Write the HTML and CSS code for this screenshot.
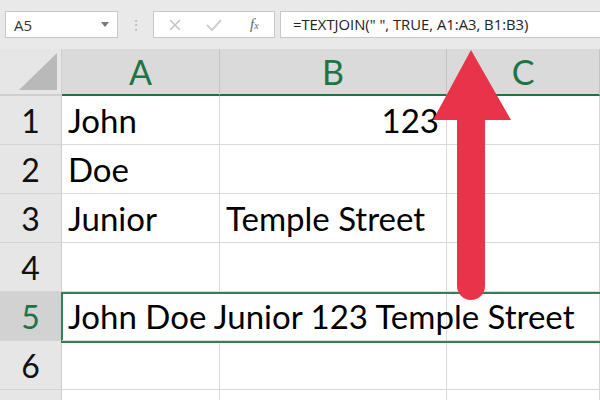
FILE: index.html
```html
<!DOCTYPE html>
<html lang="en">
<head>
    <meta charset="UTF-8">
    <meta name="viewport" content="width=device-width, initial-scale=1.0">
    <title>TEXTJOIN</title>
    <link rel="stylesheet" href="styles.css">
</head>
<body>
    <div class="formula-bar">
        <div class="name-box">
            <span>A5</span>
            <span class="caret"></span>
        </div>
        <div class="grip">⋮</div>
        <div class="fx-buttons">
            <svg class="btn-icon" width="14" height="14" viewBox="0 0 14 14">
                <path d="M2 2 L12 12 M12 2 L2 12" stroke="#c4c4c4" stroke-width="1.6" fill="none"/>
            </svg>
            <svg class="btn-icon" width="18" height="14" viewBox="0 0 18 14">
                <path d="M2 7 L7 12 L16 2" stroke="#cfcfcf" stroke-width="2" fill="none"/>
            </svg>
            <span class="fx">f<sub>x</sub></span>
        </div>
        <div class="formula-input">=TEXTJOIN(" ", TRUE, A1:A3, B1:B3)</div>
    </div>

    <div class="sheet">
        <div class="grid">
            <div class="corner"><span class="corner-tri"></span></div>
            <div class="col-head">A</div>
            <div class="col-head">B</div>
            <div class="col-head">C</div>

            <div class="row-head">1</div>
            <div class="cell">John</div>
            <div class="cell num">123</div>
            <div class="cell"></div>

            <div class="row-head">2</div>
            <div class="cell">Doe</div>
            <div class="cell"></div>
            <div class="cell"></div>

            <div class="row-head">3</div>
            <div class="cell">Junior</div>
            <div class="cell">Temple Street</div>
            <div class="cell"></div>

            <div class="row-head">4</div>
            <div class="cell"></div>
            <div class="cell"></div>
            <div class="cell"></div>

            <div class="row-head active">5</div>
            <div class="cell spill">John Doe Junior 123 Temple Street</div>
            <div class="cell"></div>
            <div class="cell"></div>

            <div class="row-head">6</div>
            <div class="cell"></div>
            <div class="cell"></div>
            <div class="cell"></div>

            <div class="row-head"></div>
            <div class="cell"></div>
            <div class="cell"></div>
            <div class="cell"></div>
        </div>

        <!-- selected range A5:C5 -->
        <div class="selection"></div>

        <!-- callout arrow pointing at the formula -->
        <svg class="arrow" width="80" height="252" viewBox="0 0 80 252">
            <path d="M35 0 L75 70 L49 70 L49 236 A14 14 0 0 1 21 236 L21 70 L-3 70 Z" fill="#e8334a"/>
        </svg>
    </div>
</body>
</html>
```

FILE: styles.css
```css
body {
    margin: 0;
    width: 600px;
    height: 400px;
    overflow: hidden;
    background: #ffffff;
    font-family: "Open Sans", "Noto Sans", sans-serif;
}

.formula-bar {
    display: flex;
    align-items: center;
    height: 49px;
    padding: 0 0 0 5px;
    background: #e9e9e9;
    box-sizing: border-box;
}
.name-box {
    display: flex;
    align-items: center;
    justify-content: space-between;
    width: 113px;
    height: 27px;
    padding: 0 8px 0 8px;
    box-sizing: border-box;
    background: #fff;
    border: 1px solid #c8c8c8;
    font-size: 15px;
    color: #333;
}
.caret {
    width: 0;
    height: 0;
    border-left: 4px solid transparent;
    border-right: 4px solid transparent;
    border-top: 5px solid #777;
}
.grip {
    width: 35px;
    text-align: center;
    color: #b5b5b5;
    font-size: 14px;
}
.fx-buttons {
    display: flex;
    align-items: center;
    width: 122px;
    height: 27px;
    box-sizing: border-box;
    background: #fff;
    border: 1px solid #c8c8c8;
    padding-left: 14px;
    gap: 23px;
}
.fx {
    font-family: "Liberation Serif", serif;
    font-style: italic;
    font-size: 15px;
    color: #666;
    margin-left: 4px;
}
.fx sub {
    font-size: 10px;
    vertical-align: 0;
}
.formula-input {
    flex: 1;
    height: 27px;
    margin-left: 5px;
    padding-left: 12px;
    box-sizing: border-box;
    background: #fff;
    border: 1px solid #c8c8c8;
    border-right: none;
    font-size: 14.8px;
    line-height: 25px;
    color: #222;
    white-space: nowrap;
}

.sheet {
    position: relative;
}
.grid {
    display: grid;
    grid-template-columns: 62px 158px 227px 1fr;
    grid-template-rows: 47px repeat(6, 49px) 20px;
    font-family: "Lato", "Open Sans", sans-serif;
}
.corner {
    background: #e6e6e6;
    border-right: 1px solid #cfcfcf;
    border-bottom: 2px solid #cfcfcf;
    display: flex;
    align-items: flex-end;
    justify-content: flex-end;
    padding: 0 4px 4px 0;
}
.corner-tri {
    width: 0;
    height: 0;
    border-left: 38px solid transparent;
    border-bottom: 37px solid #b9b9b9;
}
.col-head {
    background: #dadada;
    border-right: 1px solid #c4c4c4;
    border-bottom: 2px solid #217346;
    color: #217346;
    font-size: 34px;
    display: flex;
    align-items: center;
    justify-content: center;
}
.row-head {
    background: #e6e6e6;
    border-right: 1px solid #cfcfcf;
    border-bottom: 1px solid #d4d4d4;
    color: #111;
    font-size: 32px;
    display: flex;
    align-items: center;
    justify-content: center;
}
.row-head.active {
    background: #d2d2d2;
    color: #217346;
}
.cell {
    border-right: 1px solid #d9d9d9;
    border-bottom: 1px solid #d9d9d9;
    font-size: 33px;
    color: #000;
    display: flex;
    align-items: center;
    padding-left: 6px;
    white-space: nowrap;
}
.cell.num {
    justify-content: flex-end;
    padding-right: 7px;
}
.cell.spill {
    overflow: visible;
    z-index: 1;
    border-right: none;
}

.selection {
    position: absolute;
    left: 61px;
    top: 243px;
    right: -4px;
    height: 51px;
    border: 2px solid #3a7d55;
    box-sizing: border-box;
}
.arrow {
    position: absolute;
    left: 436px;
    top: 1px;
    overflow: visible;
}
```
